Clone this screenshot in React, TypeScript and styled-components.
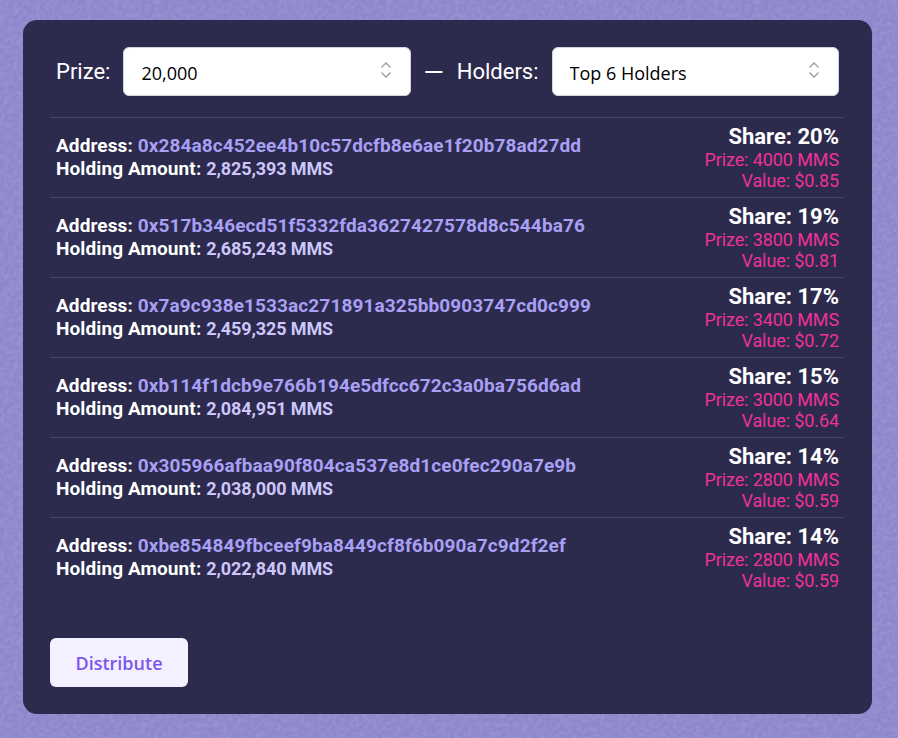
import styled, { createGlobalStyle } from "styled-components";

const noise = encodeURIComponent(
  `<svg xmlns="http://www.w3.org/2000/svg" width="300" height="300"><filter id="n"><feTurbulence type="fractalNoise" baseFrequency="0.22" numOctaves="4" stitchTiles="stitch"/><feColorMatrix values="0 0 0 0 1  0 0 0 0 1  0 0 0 0 1  0.8 0 0 0 -0.3"/></filter><rect width="300" height="300" filter="url(#n)" opacity="0.28"/></svg>`
);

const GlobalStyle = createGlobalStyle`
  html, body {
    margin: 0;
    height: 100%;
  }
  body {
    background-color: #8f87cc;
    background-image: url("data:image/svg+xml,${noise}");
    font-family: Roboto, "Liberation Sans", sans-serif;
  }
`;

const Page = styled.div`
  width: 898px;
  height: 738px;
  box-sizing: border-box;
  padding: 20px 26px 24px 23px;
`;

const Card = styled.div`
  box-sizing: border-box;
  height: 694px;
  padding: 27px 28px 27px 27px;
  background: #2c2a4d;
  border-radius: 14px;
  display: flex;
  flex-direction: column;
`;

const Controls = styled.div`
  display: flex;
  align-items: center;
  height: 49px;
  padding-left: 6px;
  margin-bottom: 21px;
  color: #fff;
  font-size: 22px;
`;

const Label = styled.label`
  margin-right: 13px;
  line-height: 26px;
`;

const Dash = styled.span`
  margin: 0 13px 0 12px;
  font-size: 26px;
  line-height: 26px;
`;

const Field = styled.div<{ $width: number }>`
  position: relative;
  width: ${(p) => p.$width}px;
  height: 49px;
`;

const Select = styled.select`
  appearance: none;
  width: 100%;
  height: 100%;
  box-sizing: border-box;
  padding: 2px 40px 0 17px;
  background: #fff;
  color: #000;
  border: 1px solid #d1d5db;
  border-radius: 6px;
  font-family: "Open Sans", "Noto Sans", sans-serif;
  font-size: 18px;
  outline: none;
`;

const Chevrons = styled.svg`
  position: absolute;
  top: 14px;
  right: 19px;
  width: 12px;
  height: 18px;
  fill: none;
  stroke: #9a9ca6;
  stroke-width: 1.3;
  pointer-events: none;
`;

const List = styled.div`
  flex: 1;
`;

const Row = styled.div`
  height: 80px;
  box-sizing: border-box;
  border-top: 1px solid #45446a;
  padding: 0 5px 0 6px;
  display: flex;
  justify-content: space-between;
`;

const Info = styled.div`
  padding-top: 16px;
  font-size: 19px;
  line-height: 23px;
  font-weight: 700;
  color: #fff;
`;

const Line = styled.div`
  white-space: nowrap;
`;

const Caption = styled.span`
  letter-spacing: 0.1px;
`;

const Address = styled.span`
  color: #a8a0f5;
  letter-spacing: 0.1px;
`;

const Amount = styled.span`
  color: #cdc6fb;
  font-size: 18px;
  letter-spacing: -0.1px;
`;

const Payout = styled.div`
  padding-top: 6px;
  text-align: right;
  display: flex;
  flex-direction: column;
`;

const Share = styled.div`
  color: #fff;
  font-size: 22px;
  font-weight: 700;
  line-height: 25px;
`;

const Pink = styled.div`
  color: #ee3297;
  font-size: 18px;
  line-height: 21px;
  letter-spacing: -0.1px;
`;

const Distribute = styled.button`
  align-self: flex-start;
  width: 138px;
  height: 49px;
  background: #f3f0ff;
  color: #7c55f0;
  border: none;
  border-radius: 6px;
  font-family: "Open Sans", "Noto Sans", sans-serif;
  font-size: 18px;
  font-weight: 600;
  cursor: pointer;
`;

const holders = [
  { address: "0x284a8c452ee4b10c57dcfb8e6ae1f20b78ad27dd", amount: "2,825,393", share: 20, prize: 4000, value: "0.85" },
  { address: "0x517b346ecd51f5332fda3627427578d8c544ba76", amount: "2,685,243", share: 19, prize: 3800, value: "0.81" },
  { address: "0x7a9c938e1533ac271891a325bb0903747cd0c999", amount: "2,459,325", share: 17, prize: 3400, value: "0.72" },
  { address: "0xb114f1dcb9e766b194e5dfcc672c3a0ba756d6ad", amount: "2,084,951", share: 15, prize: 3000, value: "0.64" },
  { address: "0x305966afbaa90f804ca537e8d1ce0fec290a7e9b", amount: "2,038,000", share: 14, prize: 2800, value: "0.59" },
  { address: "0xbe854849fbceef9ba8449cf8f6b090a7c9d2f2ef", amount: "2,022,840", share: 14, prize: 2800, value: "0.59" },
];

function UpDown() {
  return (
    <Chevrons viewBox="0 0 12 18">
      <path d="M1.500 6.500 6 2l4.500 4.500" />
      <path d="M1.500 11.500 6 16l4.500-4.500" />
    </Chevrons>
  );
}

export default function App() {
  return (
    <>
      <GlobalStyle />
      <Page>
        <Card>
          <Controls>
            <Label>Prize:</Label>
            <Field $width={288}>
              <Select defaultValue="20,000">
                <option>20,000</option>
              </Select>
              <UpDown />
            </Field>
            <Dash>—</Dash>
            <Label>Holders:</Label>
            <Field $width={287}>
              <Select defaultValue="Top 6 Holders">
                <option>Top 6 Holders</option>
              </Select>
              <UpDown />
            </Field>
          </Controls>
          <List>
            {holders.map((h) => (
              <Row key={h.address}>
                <Info>
                  <Line>
                    <Caption>Address: </Caption>
                    <Address>{h.address}</Address>
                  </Line>
                  <Line>
                    <Caption>Holding Amount: </Caption>
                    <Amount>{h.amount} MMS</Amount>
                  </Line>
                </Info>
                <Payout>
                  <Share>Share: {h.share}%</Share>
                  <Pink>Prize: {h.prize} MMS</Pink>
                  <Pink>Value: ${h.value}</Pink>
                </Payout>
              </Row>
            ))}
          </List>
          <Distribute>Distribute</Distribute>
        </Card>
      </Page>
    </>
  );
}
